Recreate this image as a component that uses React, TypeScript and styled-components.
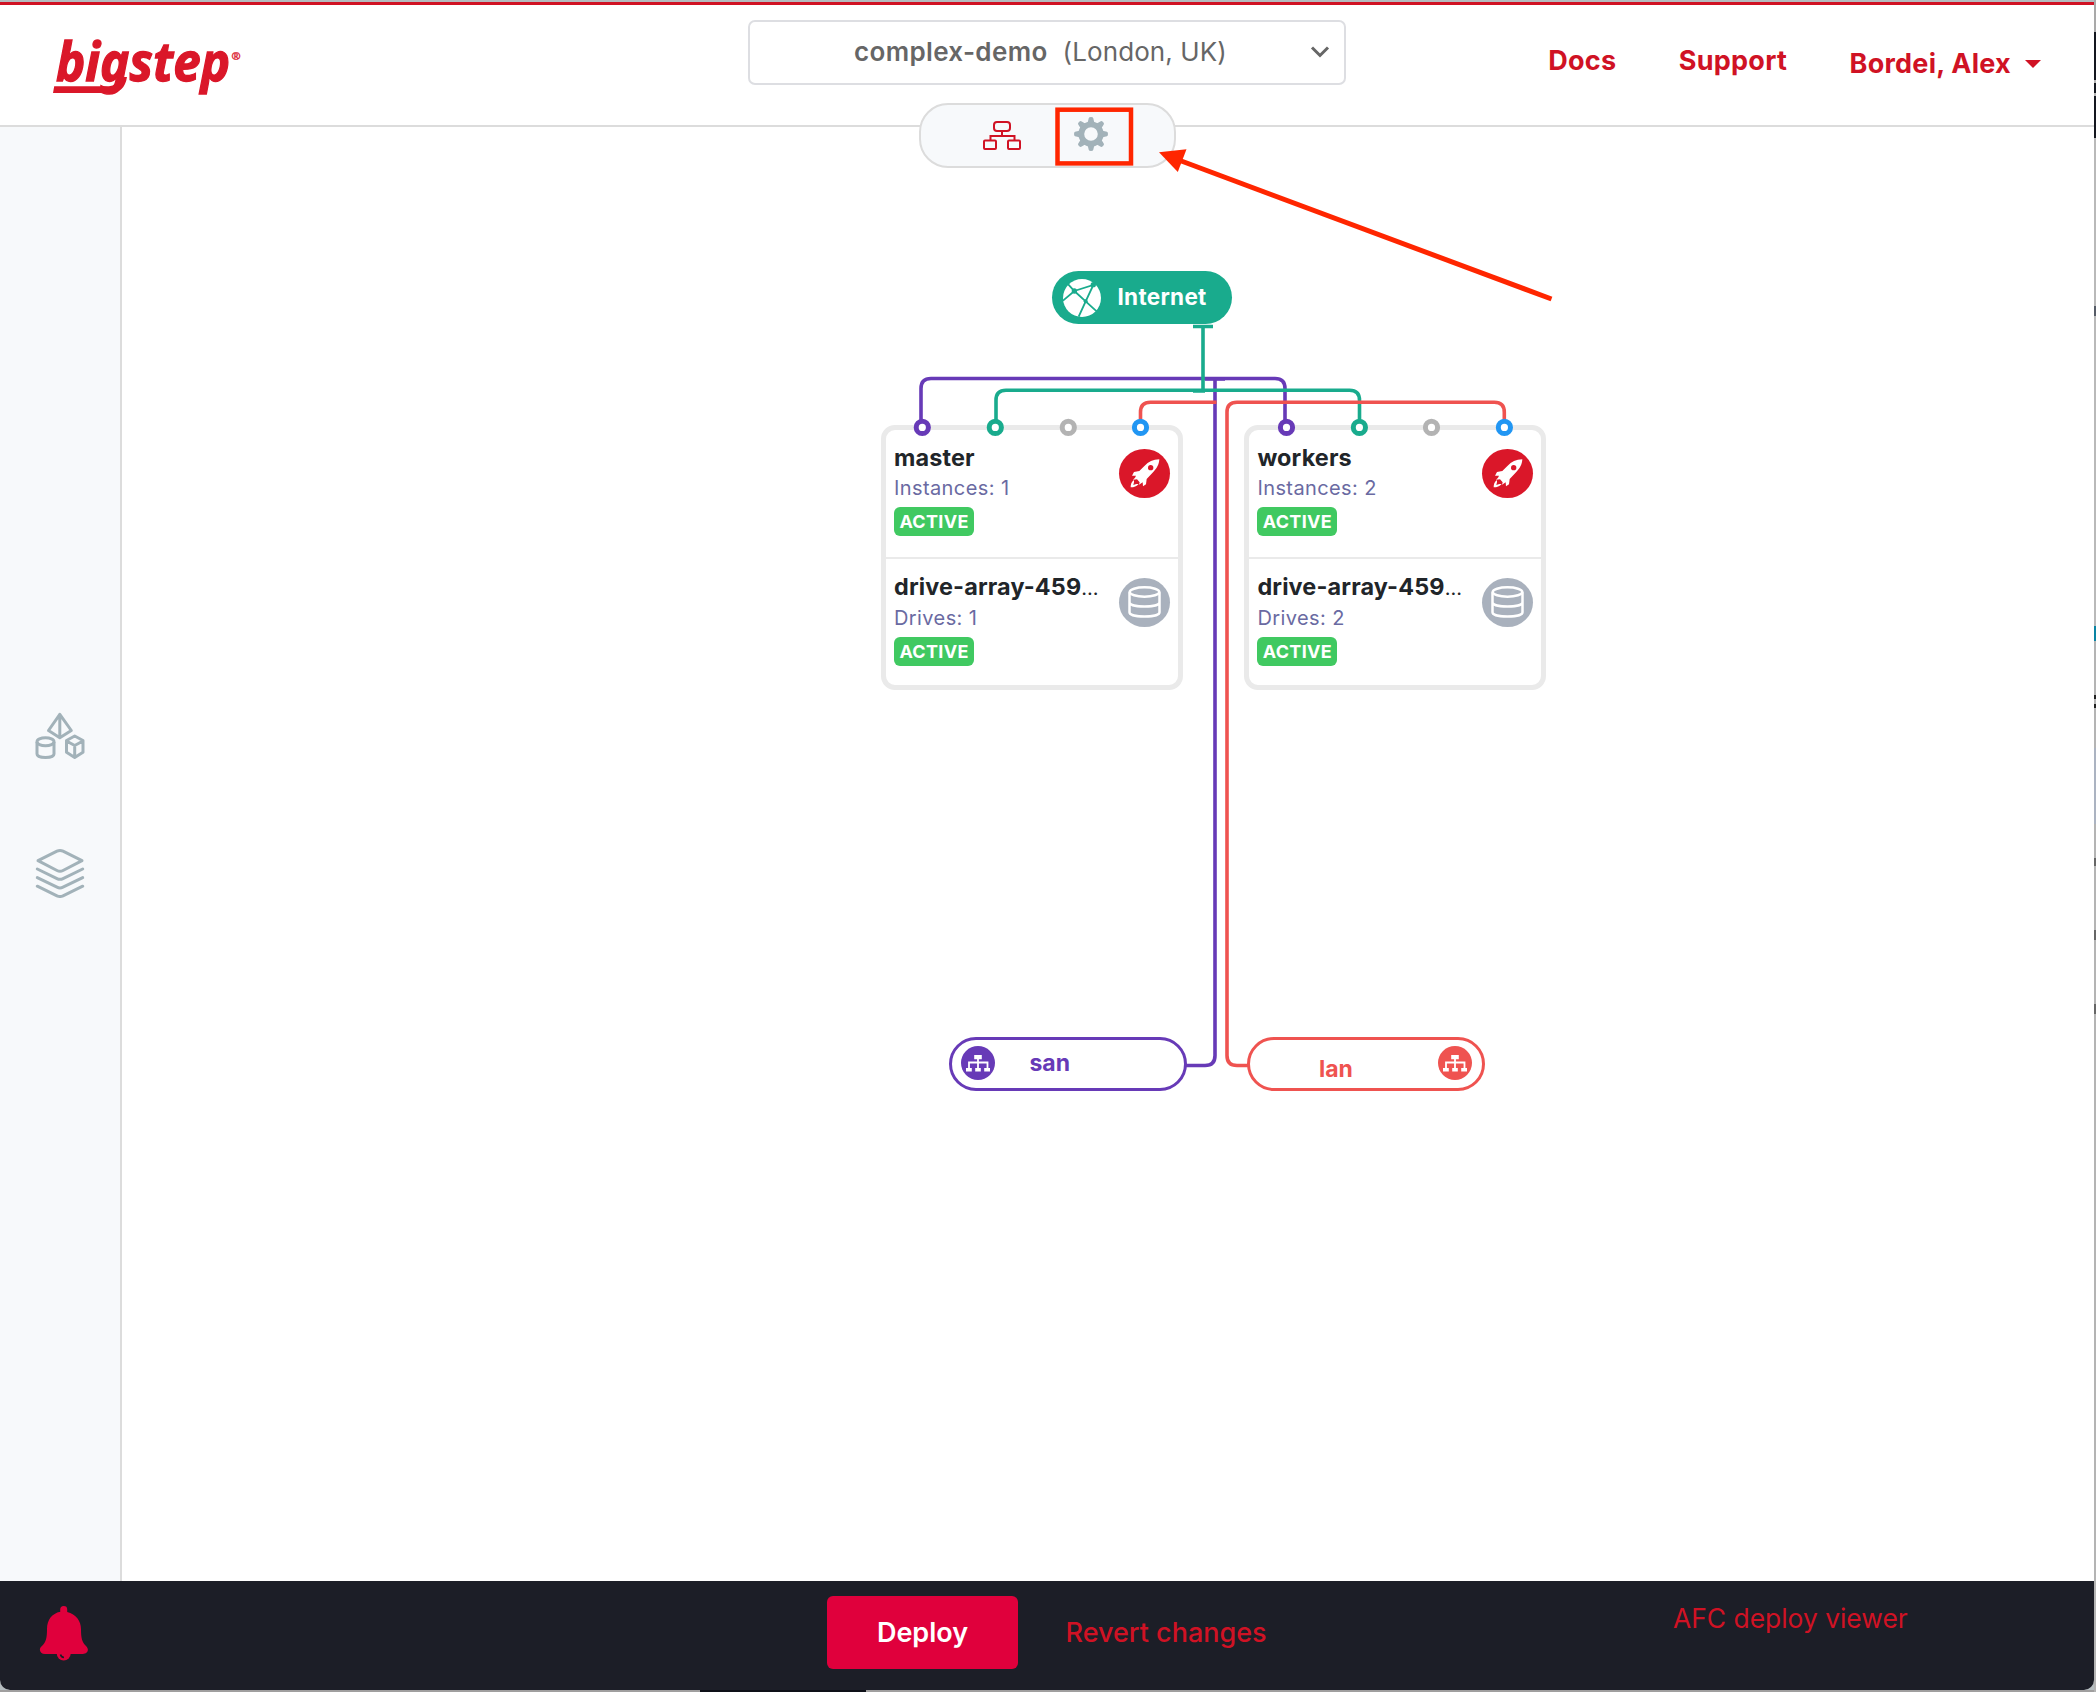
import React from 'react';
import styled, { createGlobalStyle } from 'styled-components';

const RED = '#d01224';
const STEEL = '#a2b2b9';
const PURPLE = '#673ab7';
const TEAL = '#19ab8d';
const CORAL = '#ef5350';
const BLUE = '#2196f3';

const GlobalStyle = createGlobalStyle`
  * { box-sizing: border-box; }
  body {
    margin: 0;
    font-family: Inter, "Liberation Sans", sans-serif;
    -webkit-font-smoothing: antialiased;
  }
`;

const Desktop = styled.div`
  width: 2096px;
  height: 1692px;
  padding: 2px 2px 2px 0;
  overflow: hidden;
  background:
    linear-gradient(90deg, #a09f9f 0 700px, #0e1018 700px 866px, #a09f9f 866px) 0 1690px / 2094px 2px no-repeat,
    linear-gradient(180deg,
      #a9a9a9 0 32px, #14171f 32px 80px, #b5b5b5 80px 83px, #14171f 83px 93px,
      #b5b5b5 93px 96px, #14171f 96px 138px, #b9b9b9 138px 306px, #555b66 306px 316px,
      #b9b9b9 316px 626px, #0a84a3 626px 641px, #b4b4b4 641px 695px, #222 695px 699px,
      #b4b4b4 699px 704px, #222 704px 708px, #b4b4b4 708px 748px, #abb3c1 748px 824px,
      #b4b4b4 824px 858px, #666 858px 866px, #b4b4b4 866px 930px, #666 930px 940px,
      #b4b4b4 940px 1004px, #666 1004px 1014px, #b4b4b4 1014px) 2094px 0 / 2px 100% no-repeat,
    #b4bcbf;
`;

const Window = styled.div`
  position: relative;
  display: flex;
  flex-direction: column;
  width: 2094px;
  height: 1688px;
  overflow: hidden;
  background: #fff;
  border-radius: 0 0 10px 10px;
`;

const Header = styled.header`
  display: grid;
  grid-template-columns: 748px 598px 1fr;
  align-items: start;
  height: 125px;
  flex: none;
  border-top: 3px solid ${RED};
  border-bottom: 2px solid #dcdcdc;
`;

const Logo = styled.svg`
  display: block;
  width: 200px;
  height: 100px;
  margin: 15px 0 0 48px;
`;

const InfraSelect = styled.button`
  display: grid;
  grid-template-columns: 1fr auto;
  align-items: center;
  height: 65px;
  margin-top: 14.5px;
  padding: 0 14.5px 0 104px;
  border: 2px solid #dddee2;
  border-radius: 7px;
  background: #fff;
  color: #666;
  font: 400 26px/60px Inter, sans-serif;
  letter-spacing: 0.1px;
  text-align: left;
  white-space: nowrap;
`;

const InfraName = styled.span`
  margin-right: 15px;
  font-weight: 600;
  letter-spacing: 0.35px;
`;

const Nav = styled.nav`
  display: flex;
  justify-content: flex-end;
  gap: 62.5px;
  padding: 36px 53px 0 0;
`;

const NavLink = styled.a<{ $drop?: number }>`
  display: flex;
  align-items: center;
  gap: 14px;
  height: 40px;
  margin-top: ${(p) => p.$drop ?? 0}px;
  color: ${RED};
  font-size: 27px;
  font-weight: 700;
  letter-spacing: 0.25px;
  line-height: 40px;
  white-space: nowrap;
`;

const Caret = styled.span`
  border: 8px solid transparent;
  border-top-color: ${RED};
  border-bottom: 0;
`;

const ViewSwitch = styled.div`
  position: absolute;
  left: 919px;
  top: 100.5px;
  display: flex;
  align-items: center;
  width: 257px;
  height: 65px;
  padding: 0 0 0 61px;
  gap: 51.5px;
  border: 2px solid #dcdcdc;
  border-radius: 29px;
  background: #f7f9fb;
`;

const SwitchItem = styled.span<{ $lift?: number }>`
  display: flex;
  padding-bottom: ${(p) => p.$lift ?? 0}px;
`;

const Body = styled.div`
  display: flex;
  flex: 1;
  min-height: 0;
`;

const Sidebar = styled.aside`
  display: flex;
  flex-direction: column;
  align-items: center;
  gap: 88px;
  width: 122px;
  padding-top: 585px;
  border-right: 2px solid #dcdcdc;
  background: #f7f9fb;
`;

const Canvas = styled.main`
  position: relative;
  flex: 1;
`;

const Wires = styled.svg`
  position: absolute;
  inset: 0;
  width: 1972px;
  height: 1454px;
`;

const Node = styled.div<{ $x: number; $y: number }>`
  position: absolute;
  left: ${(p) => p.$x}px;
  top: ${(p) => p.$y}px;
`;

const InternetPill = styled(Node)`
  display: flex;
  align-items: center;
  gap: 16.5px;
  width: 180px;
  height: 53px;
  padding-left: 11px;
  border-radius: 27px;
  background: ${TEAL};
  color: #fff;
`;

const InternetName = styled.span`
  padding-bottom: 2px;
  font-size: 22.5px;
  font-weight: 700;
  letter-spacing: 0.3px;
  line-height: 30px;
`;

const NetworkPill = styled(Node)<{ $color: string; $pad: string }>`
  display: flex;
  align-items: flex-start;
  justify-content: space-between;
  width: 238px;
  height: 54px;
  padding: ${(p) => p.$pad};
  border: 3px solid ${(p) => p.$color};
  border-radius: 27px;
  background: #fff;
  color: ${(p) => p.$color};
`;

const NetworkName = styled.span<{ $top: number }>`
  margin-top: ${(p) => p.$top}px;
  font-size: 23px;
  font-weight: 700;
  line-height: 30px;
`;

const Card = styled(Node)`
  width: 302px;
  height: 265px;
  border: 5px solid #eaeaea;
  border-radius: 14px;
  background: #fff;
`;

const CardSection = styled.section`
  display: flex;
  justify-content: space-between;
  height: 127px;
  padding: 13px 8px 0 8px;

  & + & {
    border-top: 2px solid #eaeaea;
    height: 128px;
  }
`;

const CardText = styled.div`
  display: flex;
  flex-direction: column;
  align-items: flex-start;
  white-space: nowrap;
`;

const CardTitle = styled.h3`
  margin: 0;
  color: #212529;
  font-size: 23.4px;
  font-weight: 700;
  letter-spacing: 0.15px;
  line-height: 30px;

  small { font-size: 20px; font-weight: 400; letter-spacing: 0; }
`;

const CardCount = styled.span`
  margin-top: 1px;
  color: #6a6aa2;
  font-size: 20px;
  letter-spacing: 0.4px;
  line-height: 28px;
`;

const Badge = styled.span`
  width: 80px;
  height: 29px;
  margin-top: 5px;
  border-radius: 6px;
  background: #40c961;
  color: #fff;
  font-size: 18px;
  font-weight: 700;
  letter-spacing: 0.3px;
  line-height: 30px;
  text-align: center;
`;

const RoundIcon = styled.span<{ $color: string }>`
  display: flex;
  align-items: center;
  justify-content: center;
  width: 51px;
  height: 49px;
  margin-top: 5.5px;
  border-radius: 50%;
  background: ${(p) => p.$color};
`;

const Footer = styled.footer`
  display: grid;
  grid-template-columns: 827px 191px 655px 1fr;
  height: 109px;
  flex: none;
  background: #1c1e27;
  color: ${RED};
  font-size: 27px;
`;

const BellSlot = styled.div`
  padding: 23.5px 0 0 39px;
`;

const DeployButton = styled.button`
  height: 73px;
  margin-top: 15px;
  border: 0;
  border-radius: 6px;
  background: #e0003c;
  color: #fff;
  font: 600 27px/70px Inter, sans-serif;
`;

const RevertLink = styled.a`
  padding-left: 47.5px;
  margin-top: 32px;
  font-weight: 500;
  line-height: 40px;
`;

const ViewerLink = styled.a`
  margin-top: 17px;
  font-size: 26.4px;
  line-height: 40px;
`;

const Annotation = styled.svg`
  position: absolute;
  left: 0;
  top: 0;
  width: 2094px;
  height: 400px;
  pointer-events: none;
`;

const BigstepLogo = () => (
  <Logo viewBox="48 20 200 100">
    <text x="56" y="80.500" fill="#da1729" stroke="#da1729" strokeWidth="1.300" fontFamily="Noto Sans, Open Sans, sans-serif" fontSize="53.500" fontWeight="700" fontStyle="italic" textLength="174" lengthAdjust="spacingAndGlyphs">bigstep</text>
    <path d="M54.200 86.300H109Q117.500 86 118.500 77L127 77Q124.500 93 110 93H53Z" fill="#da1729" />
    <text x="231.500" y="60" fill="#da1729" stroke="#da1729" strokeWidth="0.300" fontFamily="Open Sans, sans-serif" fontSize="11" fontWeight="700">®</text>
  </Logo>
);

const TopologyIcon = () => (
  <svg width="40" height="32" viewBox="982 120 40 32" fill="none" stroke={RED} strokeWidth="2">
    <rect x="994" y="123" width="16" height="9" rx="3" />
    <path d="M1002 132v5M990.500 141v-4h24v4" />
    <rect x="984" y="141.500" width="12" height="8.500" rx="1" />
    <rect x="1008" y="141.500" width="12" height="8.500" rx="1" />
  </svg>
);

const GearIcon = () => (
  <svg width="34" height="34" viewBox="-17 -17 34 34">
    <circle r="9.700" fill="none" stroke={STEEL} strokeWidth="5.800" />
    {[0, 45, 90, 135, 180, 225, 270, 315].map((a) => (
      <path key={a} d="M-3.600-10.500L-2.200-16Q-2-17 0-17T2.200-16L3.600-10.500Z" fill={STEEL} transform={`rotate(${a})`} />
    ))}
  </svg>
);

const ShapesIcon = () => (
  <svg width="50" height="48" viewBox="35.500 711.500 50 48" fill="none" stroke={STEEL} strokeWidth="3" strokeLinejoin="round">
    <path d="M60.300 713.800L49 730L60.300 737.300L71.800 730ZM60.300 714V737" />
    <ellipse cx="46" cy="741.300" rx="8.500" ry="4" />
    <path d="M37.500 741.500V753.500C37.500 758.200 54.500 758.200 54.500 753.500V741.500" />
    <path d="M75.200 735.500L83.500 740V751.800L75.200 757L67 751.800V740ZM67 740.500L75.200 745L83.500 740.500M75.200 745V757" />
  </svg>
);

const LayersIcon = () => (
  <svg width="50" height="50" viewBox="35.500 848 50 50" fill="none" stroke={STEEL} strokeWidth="3" strokeLinecap="round" strokeLinejoin="round">
    <path d="M38.500 860.700L57.500 851.200Q60.500 849.800 63.500 851.200L82.500 860.700L63.500 870.500Q60.500 872 57.500 870.500Z" />
    {[0, 8.6, 17.2].map((d) => (
      <path key={d} transform={`translate(0 ${d})`} d="M37.800 869L57.500 878.600Q60.500 880 63.500 878.600L83.200 869" />
    ))}
  </svg>
);

const GlobeIcon = () => (
  <svg width="38" height="38" viewBox="99 85 114 114">
    <circle cx="156" cy="142" r="57" fill="#fff" />
    <g fill="none" stroke={TEAL} strokeWidth="5.500">
      <path d="M112 98L133 121L167 152L200 182M99 150L133 121L190 103L167 152L146 198" />
    </g>
    <g fill={TEAL}>
      <circle cx="133" cy="121" r="8" />
      <circle cx="190" cy="102" r="8" />
      <circle cx="167" cy="152" r="6" />
    </g>
  </svg>
);

const RocketIcon = () => (
  <svg width="30" height="29" viewBox="779 296 90 87">
    <path d="M867 297C848 298 834 304 823 316L807 332L791 335L785 346L797 346L794 352L788 358L800 357L808 366L806 373L817 366L818 378L827 372L829 356L846 338C860 323 866 314 867 297Z" fill="#fff" />
    <path d="M791 359C783 364 781 372 781 381C791 381 799 378 805 371L798 371L789 374L791 366Z" fill="#fff" />
    <circle cx="841" cy="322" r="8" fill="#da1729" />
  </svg>
);

const DatabaseIcon = () => (
  <svg width="33" height="32" viewBox="774.500 678.500 99 96" fill="none" stroke="#fff" strokeWidth="7.500">
    <ellipse cx="824" cy="696.500" rx="44.500" ry="14" />
    <path d="M779 697V757C779 774 869 774 869 757V697M779 727C779 744 869 744 869 727" />
  </svg>
);

const NetworkIcon = ({ color }: { color: string }) => (
  <svg width="34" height="34" viewBox="-17 -17 34 34">
    <circle r="17" fill={color} />
    <path d="M0-5V6M-9 6V-.5H9.500V6" fill="none" stroke="#fff" strokeWidth="1.800" />
    <path d="M-3.800-8H3.800V-3.700H-3.800ZM-12 5H-6.200V8.400H-12ZM-2.800 5H2.800V8.400H-2.800ZM6.200 5H12V8.400H6.200Z" fill="#fff" />
  </svg>
);

const BellIcon = () => (
  <svg width="50" height="56" viewBox="39 1604 50 56">
    <circle cx="63.700" cy="1652.500" r="7" fill="#e0003c" />
    <path d="M60.200 1613V1608.500A3.500 3.500 0 0 1 67.200 1608.500V1611C76 1613 81 1620 81 1628C81 1637 82 1641 86 1645C90 1649 87 1653 83 1653H45C40 1653 38 1648 42 1645C46 1641 47 1637 47 1628C47 1619 52 1612.500 60.200 1610.800Z" fill="#e0003c" />
    <path d="M60.500 1653.500Q61 1656 64 1656.500" stroke="#1c1e27" strokeWidth="1.600" fill="none" />
  </svg>
);

type Port = { x: number; color: string };

const PORTS: Port[] = [
  { x: 922.3, color: PURPLE }, { x: 995.3, color: TEAL }, { x: 1068.3, color: '#b3b3b3' }, { x: 1140.5, color: BLUE },
  { x: 1286.5, color: PURPLE }, { x: 1359.4, color: TEAL }, { x: 1431.5, color: '#b3b3b3' }, { x: 1504.4, color: BLUE },
];

const InstanceCard = ({ x, name, count }: { x: number; name: string; count: number }) => (
  <Card $x={x} $y={298}>
    <CardSection>
      <CardText>
        <CardTitle>{name}</CardTitle>
        <CardCount>Instances: {count}</CardCount>
        <Badge>ACTIVE</Badge>
      </CardText>
      <RoundIcon $color="#da1729"><RocketIcon /></RoundIcon>
    </CardSection>
    <CardSection>
      <CardText>
        <CardTitle>drive-array-459<small>...</small></CardTitle>
        <CardCount>Drives: {count}</CardCount>
        <Badge>ACTIVE</Badge>
      </CardText>
      <RoundIcon $color="#a9b1bd"><DatabaseIcon /></RoundIcon>
    </CardSection>
  </Card>
);

export default function App() {
  return (
    <Desktop>
      <GlobalStyle />
      <Window>
        <Header>
          <BigstepLogo />
          <InfraSelect>
            <span><InfraName>complex-demo</InfraName>(London, UK)</span>
            <svg width="20" height="14" viewBox="0 0 20 14" fill="none" stroke="#666" strokeWidth="3">
              <path d="M2 2.500L10 10.500L18 2.500" />
            </svg>
          </InfraSelect>
          <Nav>
            <NavLink>Docs</NavLink>
            <NavLink>Support</NavLink>
            <NavLink $drop={3}>Bordei, Alex<Caret /></NavLink>
          </Nav>
        </Header>
        <Body>
          <Sidebar>
            <ShapesIcon />
            <LayersIcon />
          </Sidebar>
          <Canvas>
            <InstanceCard x={759} name="master" count={1} />
            <InstanceCard x={1122.4} name="workers" count={2} />
            <Wires viewBox="122 127 1972 1454" fill="none" strokeWidth="3.600">
              <g stroke={PURPLE}>
                <path d="M921 427V388.500Q921 378.500 931 378.500H1275Q1285 378.500 1285 388.500V427" />
                <path d="M1205 379H1225M1215 378V1055.500Q1215 1065.500 1205 1065.500H1186" />
              </g>
              <g stroke={TEAL}>
                <path d="M996 427V400.200Q996 390.200 1006 390.200H1349.500Q1359.500 390.200 1359.500 400.200V427" />
                <path d="M1193 326.500H1213M1203 325V392M1193 391H1205" />
              </g>
              <g stroke={CORAL}>
                <path d="M1140.500 427V412.200Q1140.500 402.200 1150.500 402.200H1216.500" />
                <path d="M1504.300 427V412.200Q1504.300 402.200 1494.300 402.200H1237Q1227 402.200 1227 412.200V1055.500Q1227 1065.500 1237 1065.500H1248" />
              </g>
              {PORTS.map((p) => (
                <circle key={p.x} cx={p.x} cy="427.400" r="6.100" fill="#fff" stroke={p.color} strokeWidth="5" />
              ))}
            </Wires>
            <InternetPill $x={930} $y={144}>
              <GlobeIcon />
              <InternetName>Internet</InternetName>
            </InternetPill>
            <NetworkPill $x={827} $y={910} $color={PURPLE} $pad="6px 114px 0 9px">
              <NetworkIcon color={PURPLE} />
              <NetworkName $top={2}>san</NetworkName>
            </NetworkPill>
            <NetworkPill $x={1125} $y={910} $color={CORAL} $pad="6px 10px 0 69px">
              <NetworkName $top={8}>lan</NetworkName>
              <NetworkIcon color={CORAL} />
            </NetworkPill>
          </Canvas>
        </Body>
        <Footer>
          <BellSlot><BellIcon /></BellSlot>
          <DeployButton>Deploy</DeployButton>
          <RevertLink>Revert changes</RevertLink>
          <ViewerLink>AFC deploy viewer</ViewerLink>
        </Footer>
        <ViewSwitch>
          <SwitchItem><TopologyIcon /></SwitchItem>
          <SwitchItem $lift={2}><GearIcon /></SwitchItem>
        </ViewSwitch>
        <Annotation viewBox="0 2 2094 400">
          <rect x="1057.500" y="109.700" width="73.500" height="53.700" fill="none" stroke="#ff2600" strokeWidth="4.500" />
          <path d="M1180 160.500L1551.500 299" stroke="#ff2600" strokeWidth="5" />
          <path d="M1159 152.300L1186.500 149.300L1177.800 172Z" fill="#ff2600" />
        </Annotation>
      </Window>
    </Desktop>
  );
}
